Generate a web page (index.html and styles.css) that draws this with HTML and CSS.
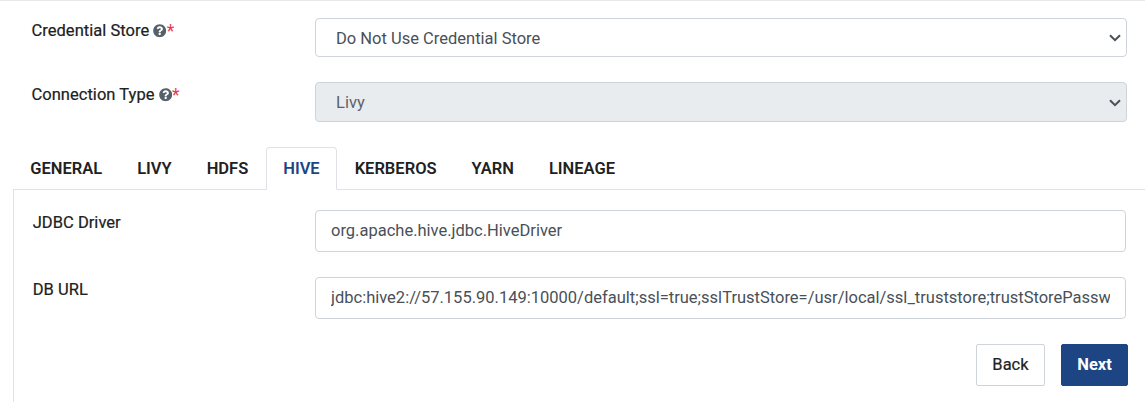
FILE: index.html
```
<!DOCTYPE html>
<html lang="en">
<head>
<meta charset="utf-8">
<title>Connection</title>
<link rel="stylesheet" href="styles.css">
</head>
<body>
<svg class="defs" width="0" height="0" aria-hidden="true">
  <symbol id="help" viewBox="0 0 512 512"><path d="M504 256c0 136.997-111.043 248-248 248S8 392.997 8 256C8 119.083 119.043 8 256 8s248 111.083 248 248zM262.655 90c-54.497 0-89.255 22.957-116.549 63.758-3.536 5.286-2.353 12.415 2.715 16.258l34.699 26.31c5.205 3.947 12.621 3.008 16.665-2.122 17.864-22.658 30.113-35.797 57.303-35.797 20.429 0 45.698 13.148 45.698 32.958 0 14.976-12.363 22.667-32.534 33.976C247.128 238.528 216 254.941 216 296v4c0 6.627 5.373 12 12 12h56c6.627 0 12-5.373 12-12v-1.333c0-28.462 83.186-29.647 83.186-106.667 0-58.002-60.165-102-116.531-102zM256 338c-25.365 0-46 20.635-46 46 0 25.364 20.635 46 46 46s46-20.636 46-46c0-25.364-20.635-46-46-46z"/></symbol>
  <symbol id="chevron" viewBox="0 0 12 8"><path d="M1 1.2l5 5 5-5" fill="none" stroke="#495057" stroke-width="2"/></symbol>
</svg>
<main class="form">
  <div class="row row-store">
    <label class="label">Credential Store <svg class="help"><use href="#help"/></svg><span class="required">*</span></label>
    <div class="select select-store"><span>Do Not Use Credential Store</span><svg class="chevron"><use href="#chevron"/></svg></div>
  </div>
  <div class="row row-type">
    <label class="label">Connection Type <svg class="help"><use href="#help"/></svg><span class="required">*</span></label>
    <div class="select select-disabled"><span>Livy</span><svg class="chevron"><use href="#chevron"/></svg></div>
  </div>
  <nav class="tabs">
    <a class="tab">GENERAL</a>
    <a class="tab">LIVY</a>
    <a class="tab">HDFS</a>
    <a class="tab tab-active">HIVE</a>
    <a class="tab">KERBEROS</a>
    <a class="tab">YARN</a>
    <a class="tab">LINEAGE</a>
  </nav>
  <section class="pane">
    <div class="field">
      <label class="label">JDBC Driver</label>
      <div class="input"><span class="value">org.apache.hive.jdbc.HiveDriver</span></div>
    </div>
    <div class="field">
      <label class="label">DB URL</label>
      <div class="input"><span class="value">jdbc:hive2://57.155.90.149:10000/default;ssl=true;sslTrustStore=/usr/local/ssl_truststore;trustStorePassw</span></div>
    </div>
    <div class="actions">
      <button class="button">Back</button>
      <button class="button button-primary">Next</button>
    </div>
  </section>
</main>
</body>
</html>
```
FILE: styles.css
```
* { box-sizing: border-box; }
body {
  margin: 0;
  background: #fff;
  color: #212529;
  font: 400 16.5px/24px Roboto, "Liberation Sans", sans-serif;
  overflow: hidden;
}
.defs { display: block; }
.form {
  height: 402px;
  border-top: 1px solid #e5e9ec;
  display: flex;
  flex-direction: column;
}
.row {
  display: grid;
  grid-template-columns: 283.5px 812px;
  padding-left: 31.5px;
  align-items: start;
}
.row-store { padding-top: 17px; }
.row-type { padding-top: 25px; }
.label {
  padding-top: 1px;
  color: #212121;
  white-space: nowrap;
  letter-spacing: 0.03px;
  -webkit-text-stroke: 0.2px #212121;
}
.help { width: 13.4px; height: 13.4px; fill: #56606a; vertical-align: -1.5px; }
.required { color: #e63950; font-size: 17.5px; line-height: 1; vertical-align: -0.5px; -webkit-text-stroke: 0; }
.select {
  display: flex;
  align-items: center;
  justify-content: space-between;
  height: 40px;
  padding: 1px 5px 0 20px;
  border: 1px solid #ced4da;
  border-radius: 4px;
  color: #495057;
}
.select-store { height: 39px; padding-top: 2px; }
.select-store .chevron { margin-bottom: 2px; }
.select-disabled { background: #e9ecef; color: #5b636a; }
.chevron { width: 12px; height: 8px; }
.tabs {
  display: flex;
  height: 43px;
  margin: 25px 0 0 13px;
  border-bottom: 1px solid #dee2e6;
}
.tab {
  height: 43px;
  padding: 9px 16.8px 0 16.2px;
  border: 1px solid transparent;
  color: #212121;
  font-weight: 600;
}
.tab-active {
  padding-right: 16.2px;
  margin-right: 0.6px;
  border-color: #dee2e6 #dee2e6 #fff;
  border-radius: 4px 4px 0 0;
  color: #1d4583;
}
.pane {
  flex: 1;
  margin-left: 13px;
  padding-top: 20px;
  border-left: 1px solid #dee2e6;
}
.field {
  display: grid;
  grid-template-columns: 282.3px 811px;
  padding-left: 18.7px;
  margin-bottom: 25px;
}
.input {
  height: 42px;
  padding: 8px 15px;
  border: 1px solid #ced4da;
  border-radius: 4px;
  color: #495057;
}
.value { display: block; overflow: hidden; white-space: nowrap; }
.actions {
  display: flex;
  justify-content: flex-end;
  gap: 16px;
  padding-right: 17px;
}
.button {
  width: 69px;
  height: 42px;
  padding: 0;
  border: 1px solid #ced4da;
  border-radius: 2px;
  background: #fff;
  color: #212121;
  font: inherit;
  -webkit-text-stroke: 0.2px #212121;
}
.button-primary {
  width: 67px;
  border-color: #1d4583;
  background: #1d4583;
  color: #fff;
  font-weight: 700;
  -webkit-text-stroke: 0;
}
```
